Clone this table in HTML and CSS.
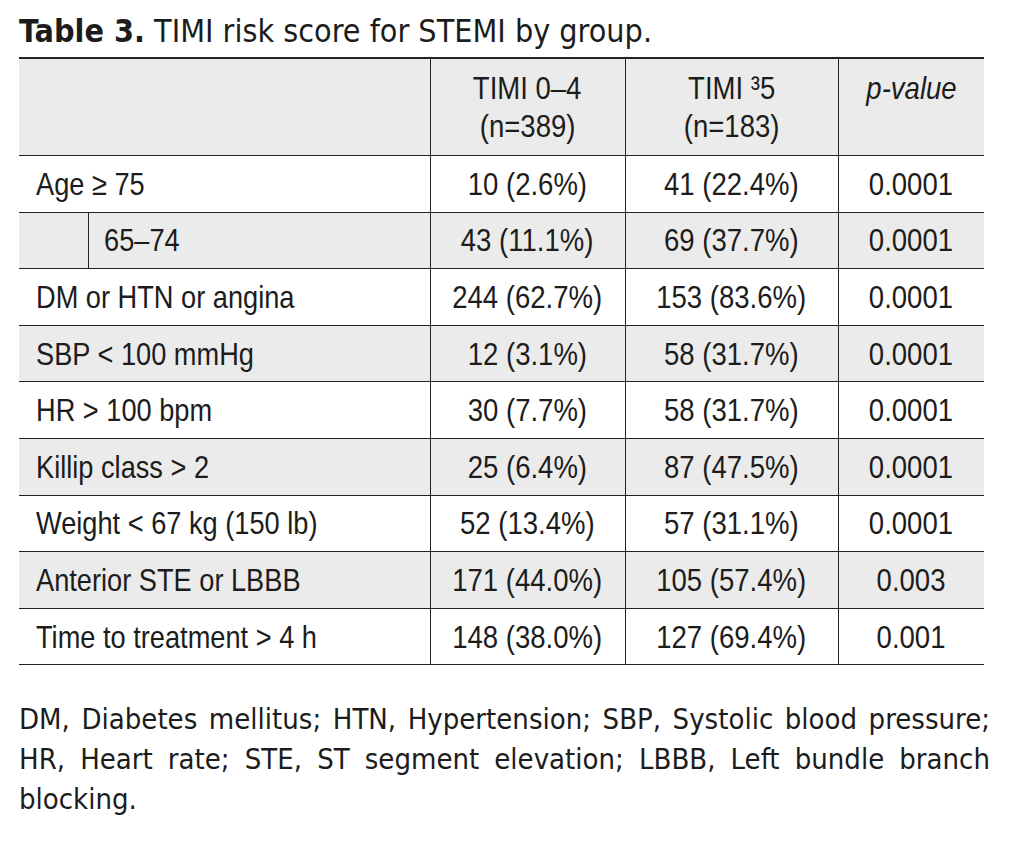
FILE: index.html
```html
<!DOCTYPE html>
<html>
<head>
<meta charset="utf-8">
<link rel="stylesheet" href="styles.css">
</head>
<body>
<div class="page">
  <h1 class="title"><b>Table 3.</b> TIMI risk score for STEMI by group.</h1>
  <table class="data">
    <colgroup>
      <col class="c-ind"><col class="c-lab"><col class="c-a"><col class="c-b"><col class="c-p">
    </colgroup>
    <thead>
      <tr class="gray">
        <th colspan="2"></th>
        <th><div class="hl"><span class="t">TIMI 0–4</span></div><div class="hl"><span class="t">(n=389)</span></div></th>
        <th><div class="hl"><span class="t">TIMI ³5</span></div><div class="hl"><span class="t">(n=183)</span></div></th>
        <th><div class="hl"><span class="t"><i>p-value</i></span></div><div class="hl"></div></th>
      </tr>
    </thead>
    <tbody>
      <tr><td colspan="2" class="lab"><span class="t">Age ≥ 75</span></td><td><span class="t">10 (2.6%)</span></td><td><span class="t">41 (22.4%)</span></td><td><span class="t">0.0001</span></td></tr>
      <tr class="gray"><td class="ind"></td><td class="lab sub"><span class="t">65–74</span></td><td><span class="t">43 (11.1%)</span></td><td><span class="t">69 (37.7%)</span></td><td><span class="t">0.0001</span></td></tr>
      <tr><td colspan="2" class="lab"><span class="t">DM or HTN or angina</span></td><td><span class="t">244 (62.7%)</span></td><td><span class="t">153 (83.6%)</span></td><td><span class="t">0.0001</span></td></tr>
      <tr class="gray"><td colspan="2" class="lab"><span class="t">SBP &lt; 100 mmHg</span></td><td><span class="t">12 (3.1%)</span></td><td><span class="t">58 (31.7%)</span></td><td><span class="t">0.0001</span></td></tr>
      <tr><td colspan="2" class="lab"><span class="t">HR &gt; 100 bpm</span></td><td><span class="t">30 (7.7%)</span></td><td><span class="t">58 (31.7%)</span></td><td><span class="t">0.0001</span></td></tr>
      <tr class="gray"><td colspan="2" class="lab"><span class="t">Killip class &gt; 2</span></td><td><span class="t">25 (6.4%)</span></td><td><span class="t">87 (47.5%)</span></td><td><span class="t">0.0001</span></td></tr>
      <tr><td colspan="2" class="lab"><span class="t">Weight &lt; 67 kg (150 lb)</span></td><td><span class="t">52 (13.4%)</span></td><td><span class="t">57 (31.1%)</span></td><td><span class="t">0.0001</span></td></tr>
      <tr class="gray"><td colspan="2" class="lab"><span class="t">Anterior STE or LBBB</span></td><td><span class="t">171 (44.0%)</span></td><td><span class="t">105 (57.4%)</span></td><td><span class="t">0.003</span></td></tr>
      <tr><td colspan="2" class="lab"><span class="t">Time to treatment &gt; 4 h</span></td><td><span class="t">148 (38.0%)</span></td><td><span class="t">127 (69.4%)</span></td><td><span class="t">0.001</span></td></tr>
    </tbody>
  </table>
  <p class="note">DM, Diabetes mellitus; HTN, Hypertension; SBP, Systolic blood pressure; HR, Heart rate; STE, ST segment elevation; LBBB, Left bundle branch blocking.</p>
</div>
</body>
</html>
```
FILE: styles.css
```css
html, body {
  margin: 0;
  padding: 0;
  background: #ffffff;
}
.page {
  padding: 13px 26px 0 19px;
  color: #1c1c1c;
}
.title {
  margin: 0 0 8px 0;
  font-family: "DejaVu Sans Condensed", "DejaVu Sans", sans-serif;
  font-stretch: condensed;
  font-weight: normal;
  font-size: 32px;
  line-height: 36px;
  white-space: nowrap;
}
.title b {
  font-weight: bold;
}
.data {
  width: 965px;
  border-collapse: collapse;
  table-layout: fixed;
  font-family: "Liberation Sans", Arial, sans-serif;
  font-size: 32px;
  line-height: 38px;
  color: #1c1c1c;
}
.t {
  display: inline-block;
  vertical-align: top;
  white-space: nowrap;
  transform: scaleX(0.86);
  transform-origin: 50% 50%;
}
.c-ind { width: 69px; }
.c-lab { width: 342px; }
.c-a { width: 195px; }
.c-b { width: 213px; }
.c-p { width: 146px; }
.data th {
  font-weight: normal;
  height: 96px;
  text-align: center;
  border-top: 2px solid #222;
  border-bottom: 1.5px solid #222;
  border-left: 1px solid #222;
  vertical-align: middle;
  padding: 0;
}
.data th:first-child { border-left: none; }
.hl {
  height: 38px;
}
.data td {
  height: 55.6px;
  padding: 0;
  text-align: center;
  vertical-align: middle;
  border-bottom: 1.5px solid #222;
  border-left: 1px solid #222;
}
.data td:first-child { border-left: none; }
.data td.lab {
  text-align: left;
  padding-left: 17px;
}
.data td.lab .t {
  transform: scaleX(0.85);
  transform-origin: 0 50%;
}
.data td.sub {
  padding-left: 15px;
}
.gray { background: #ebebeb; }
.note {
  margin: 34px 0 0 0;
  font-family: "DejaVu Sans Condensed", "DejaVu Sans", sans-serif;
  font-stretch: condensed;
  font-size: 29px;
  line-height: 40px;
  word-spacing: -1px;
  text-align: justify;
  color: #1c1c1c;
}
```
